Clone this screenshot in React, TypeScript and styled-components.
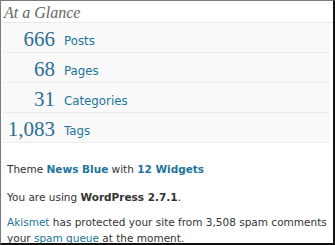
import React from "react";
import styled, { createGlobalStyle } from "styled-components";

const Global = createGlobalStyle`
  html, body { margin: 0; padding: 0; background: #fff; }
  * { box-sizing: border-box; }
`;

const Frame = styled.div`
  width: 335px;
  height: 245px;
  border-left: 1px solid #7a7a7a;
  border-top: 1px solid #7a7a7a;
  border-right: 2px solid #111;
  border-bottom: 2px solid #111;
  background: #fff;
  overflow: hidden;
  display: flex;
  flex-direction: column;
`;

const Header = styled.h3`
  margin: 0;
  height: 23px;
  padding: 3px 0 0 3px;
  font-family: "Liberation Serif", serif;
  font-style: italic;
  font-weight: normal;
  font-size: 16px;
  color: #666;
  border-bottom: 1px solid #e8e8e8;
`;

const Table = styled.div`
  margin: 0 3px 0 2px;
  background: #f9f9f9;
  display: flex;
  flex-direction: column;
`;

const Row = styled.div`
  height: 30px;
  padding-top: 4px;
  display: flex;
  align-items: center;
  border-bottom: 1px solid #ececec;
`;

const Num = styled.span`
  width: 52px;
  text-align: right;
  font-family: "Liberation Serif", serif;
  font-size: 21px;
  color: #2e6f93;
`;

const Label = styled.span`
  margin-left: 9px;
  padding-top: 2px;
  font-family: "DejaVu Sans", sans-serif;
  font-size: 11.8px;
  color: #21759b;
`;

const Info = styled.div`
  padding: 18px 0 0 6px;
  font-family: "DejaVu Sans", sans-serif;
  font-size: 10.5px;
  line-height: 16px;
  color: #333;
`;

const Para = styled.p<{ $gap?: number }>`
  margin: 0 0 ${(p) => p.$gap ?? 10}px;
`;

const Link = styled.span`
  color: #21759b;
`;

const BLink = styled.strong`
  color: #21759b;
`;

const rows = [
  ["666", "Posts"],
  ["68", "Pages"],
  ["31", "Categories"],
  ["1,083", "Tags"],
];

export default function App() {
  return (
    <>
      <Global />
      <Frame>
        <Header>At a Glance</Header>
        <Table>
          {rows.map(([n, l]) => (
            <Row key={l}>
              <Num>{n}</Num>
              <Label>{l}</Label>
            </Row>
          ))}
        </Table>
        <Info>
          <Para $gap={12}>
            Theme <BLink>News Blue</BLink> with <BLink>12 Widgets</BLink>
          </Para>
          <Para $gap={9}>
            You are using <strong>WordPress 2.7.1</strong>.
          </Para>
          <Para $gap={0}>
            <Link>Akismet</Link> has protected your site from 3,508 spam comments
            <br />
            your <Link>spam queue</Link> at the moment.
          </Para>
        </Info>
      </Frame>
    </>
  );
}
